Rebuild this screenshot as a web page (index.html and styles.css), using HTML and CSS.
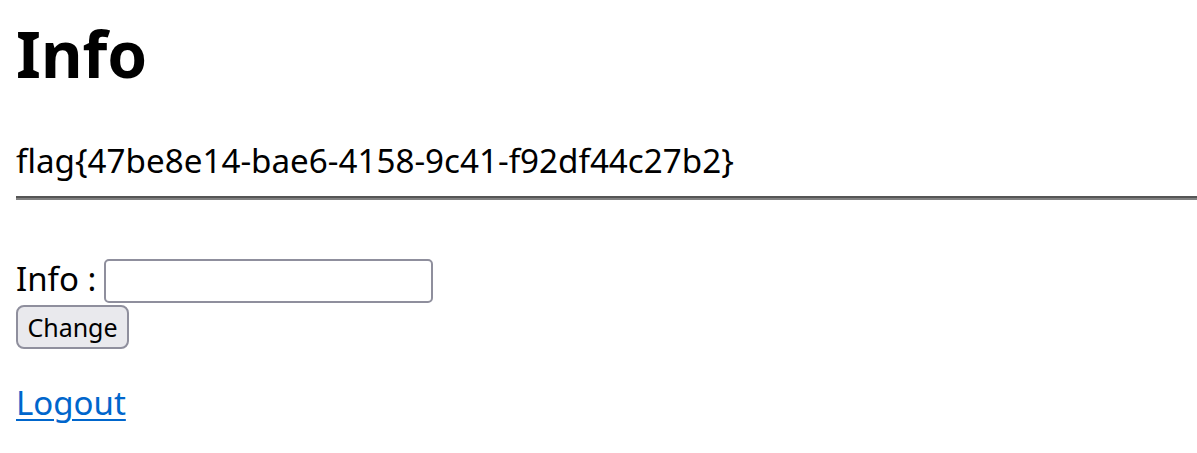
FILE: index.html
```html
<!DOCTYPE html>
<html>
<head>
<meta charset="utf-8">
<title>Info</title>
<link rel="stylesheet" href="styles.css">
</head>
<body>
<h1 class="title">Info</h1>
<div class="flag">flag{47be8e14-bae6-4158-9c41-f92df44c27b2}</div>
<hr class="rule">
<form class="form">
  <div class="row">
    <label class="label" for="info">Info :</label>
    <input class="field" id="info" type="text">
  </div>
  <div class="row">
    <button class="btn" type="button">Change</button>
  </div>
</form>
<p class="links"><a class="link" href="#">Logout</a></p>
</body>
</html>
```
FILE: styles.css
```css
html, body {
  background: #ffffff;
}
body {
  margin: 0;
  padding: 16px 0 0 16px;
  font-family: "Noto Sans", "Open Sans", sans-serif;
  font-size: 33px;
  color: #000000;
}
.title {
  margin: 0;
  font-size: 64px;
  font-weight: 700;
  line-height: 76px;
}
.flag {
  margin-top: 47px;
  font-size: 33.2px;
  line-height: 44px;
  white-space: nowrap;
}
.rule {
  margin: 13px 0 0 0;
  height: 0;
  border: 0;
  border-top: 2px solid #555555;
  border-bottom: 2px solid #808080;
}
.form {
  margin: 59px 0 0 0;
}
.row {
  display: flex;
  align-items: flex-start;
  gap: 8px;
}
.row + .row {
  margin-top: 2px;
}
.label {
  line-height: 40px;
}
.field {
  box-sizing: border-box;
  width: 329px;
  height: 44px;
  margin: 0;
  border: 2px solid #8f8f9d;
  border-radius: 5px;
  background: #ffffff;
  font-family: "Noto Sans", sans-serif;
  font-size: 26px;
  padding: 2px 6px;
}
.btn {
  box-sizing: border-box;
  height: 44px;
  width: 113px;
  margin: 0;
  padding: 0;
  border: 2px solid #8f8f9d;
  border-radius: 8px;
  background: #e9e9ed;
  color: #000000;
  font-family: "Noto Sans", sans-serif;
  font-size: 25px;
  line-height: 38px;
}
.links {
  margin: 32px 0 0 0;
  line-height: 44px;
}
.link {
  color: #0066cc;
  text-decoration: underline;
  text-decoration-thickness: 2px;
  text-underline-offset: 4px;
}
```
